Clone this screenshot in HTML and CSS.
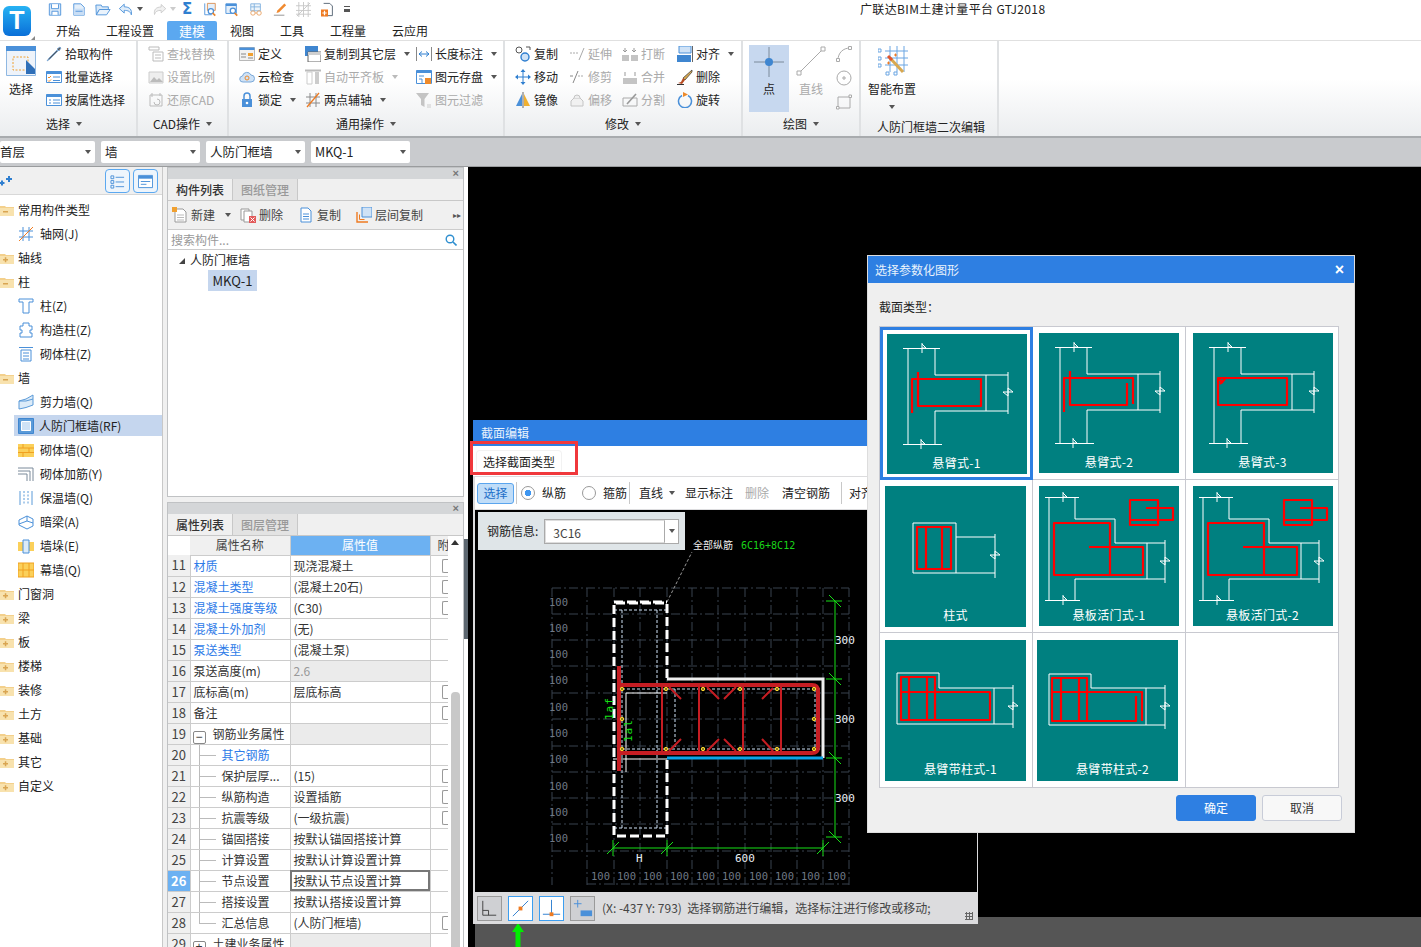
FILE: index.html
```html
<!DOCTYPE html>
<html lang="zh-CN">
<head>
<meta charset="utf-8">
<title>广联达BIM土建计量平台 GTJ2018</title>
<link rel="stylesheet" href="styles.css">
</head>
<body>
<svg class="defs" width="0" height="0" aria-hidden="true">
  <defs>
    <symbol id="fminus" viewBox="0 0 14 14"><path d="M0 3h5l1 1h8v9H0z" fill="#f3d08c"/><path d="M0 5h14v8H0z" fill="#f8e2ae"/><path d="M3 8h5v1.500H3z" fill="#d9a552"/></symbol>
    <symbol id="fplus" viewBox="0 0 14 14"><path d="M0 3h5l1 1h8v9H0z" fill="#f3d08c"/><path d="M0 5h14v8H0z" fill="#f8e2ae"/><path d="M3 8h5v1.500H3zM4.800 6.200h1.500v5H4.800z" fill="#d9a552"/></symbol>
    <symbol id="wallT" viewBox="0 0 140 140">
      <path class="w" d="M16 14.500H53M21 14V110M48 14V41H121M121 38V80M48 77H121M99 41V77M48 77V110M16 110.500H55"/>
      <path class="w" d="M35 9V19M35 10L39 14H35M34 105V115M34 106L38 110H34M116 58H126M121 54L126 58M116 58L121 62V54"/>
    </symbol>
    <symbol id="slab" viewBox="0 0 140 140">
      <path class="w" d="M10 11V114M6 11.500H40M36 11V33H76V57H126M126 54V97M36 93H126M36 93V114M6 114.500H41M108 57V93"/>
      <path class="w" d="M24 6V16M24 7L28 11H24M24 109V119M24 110L28 114H24M121 75H131M126 71L131 75M121 75L126 79V71"/>
      <path class="r" d="M71 61V37H15V89H104V61H50M71 61V89"/>
      <path class="r" d="M91 14H119V39H91ZM107 22H134V34H92"/>
    </symbol>
  </defs>
</svg>

<header class="topbar">
  <div class="logo-wrap">
    <div class="logo">T</div>
    <i class="logo-grip"></i>
  </div>
  <div class="top-main">
    <div class="qat">
      <svg class="q" viewBox="0 0 16 16"><path d="M1.500 1.500h13v13h-13z" fill="#d8e8f8" stroke="#4a90d9"/><path d="M4 2v5h8V2M4.500 14v-4h7v4" fill="#fff" stroke="#4a90d9"/></svg>
      <svg class="q q2" viewBox="0 0 16 16"><path d="M2 1.500h8l4 4v9H2z" fill="#e4effa" stroke="#4a90d9"/><path d="M2 7h12v7.500H2z" fill="#c9def5"/><path d="M4 10h8" stroke="#4a90d9"/></svg>
      <svg class="q q3" viewBox="0 0 18 16"><path d="M1 3h6l1 2h7v3H5L1.500 14z" fill="#d8e8f8" stroke="#4a90d9"/><path d="M5 8h12l-4 6H1.500z" fill="#eaf3fc" stroke="#4a90d9"/></svg>
      <svg class="q q4" viewBox="0 0 18 16"><path d="M7 2L1.500 7 7 12V9c4 0 7 1 8 5 1-6-2-9-8-9z" fill="#e0edfa" stroke="#4a90d9"/></svg>
      <i class="tri q5"></i>
      <svg class="q q6" viewBox="0 0 18 16"><path d="M11 2l5.500 5L11 12V9c-4 0-7 1-8 5-1-6 2-9 8-9z" fill="#f1f1f1" stroke="#c8c8c8"/></svg>
      <i class="tri q7"></i>
      <span class="sigma">Σ</span>
      <svg class="q q9" viewBox="0 0 16 16"><path d="M2 1v13h8" fill="none" stroke="#4a90d9"/><path d="M5 1h9v8H5z" fill="#e4effa" stroke="#d98a4a"/><circle cx="9" cy="10" r="3" fill="#fff" stroke="#4a90d9" stroke-width="1.400"/><path d="M11 12l3 3" stroke="#e8842c" stroke-width="2"/></svg>
      <svg class="q q10" viewBox="0 0 16 16"><path d="M1 1.500h12v11H1z" fill="#e4effa" stroke="#4a90d9"/><path d="M1 1.500h12V4H1z" fill="#4a90d9"/><circle cx="9" cy="9.500" r="3" fill="#fff" stroke="#4a90d9" stroke-width="1.400"/><path d="M11 12l3 3" stroke="#e8842c" stroke-width="2"/></svg>
      <svg class="q q11" viewBox="0 0 16 16"><path d="M2 1.500h11v8H2z" fill="#eef5fb" stroke="#7fb0de"/><path d="M2 5h11M6 1.500v8" stroke="#7fb0de"/><circle cx="4.500" cy="12" r="2.500" fill="none" stroke="#e8a060"/><circle cx="11.500" cy="12" r="2.500" fill="none" stroke="#e8a060"/><path d="M7 12h2" stroke="#e8a060"/></svg>
      <svg class="q q12" viewBox="0 0 16 16"><path d="M13 1L5 9l-1 3 3-1 8-8z" fill="#f08a30"/><path d="M1 14.500h12" stroke="#888"/></svg>
      <svg class="q q13" viewBox="0 0 16 16"><path d="M3 0v16M8 0v16M13 0v16M0 4h16M0 9h16M0 13h16M1 15L15 1" stroke="#c8c8c8" fill="none"/></svg>
      <svg class="q q14" viewBox="0 0 16 16"><path d="M3 1h7l3 3v11H5" fill="#fff" stroke="#4a5a6a"/><path d="M0 8h8v8H0z" fill="#ee7b22"/><path d="M4 9.500v5M1.500 12h5" stroke="#fff" stroke-width="1.400"/></svg>
      <i class="more q15"></i>
    </div>
    <nav class="tabs">
      <span class="tab t1">开始</span><span class="tab t2">工程设置</span><span class="tab active">建模</span><span class="tab t4">视图</span><span class="tab t5">工具</span><span class="tab t6">工程量</span><span class="tab t7">云应用</span>
    </nav>
  </div>
  <div class="app-title">广联达BIM土建计量平台 GTJ2018</div>
</header>

<section class="ribbon">
  <div class="group g1">
    <div class="gbody">
      <div class="big">
        <svg class="bigico" viewBox="0 0 30 30"><path d="M.5.5h29v29H.5z" fill="#eef3fa" stroke="#8fb8e2"/><path d="M0 0h30v5H0z" fill="#4a90d9"/><path d="M7 11h15v13H7z" fill="none" stroke="#f0a030" stroke-dasharray="2 1.500"/><path d="M20 14l9 9v5H20z" fill="#2f6fb8"/></svg>
        <span>选择</span>
      </div>
      <div class="col c1">
        <div class="it"><svg class="ic" viewBox="0 0 16 16"><path d="M14 1l1 1-2 3-2-2zM11 4l1 1-8 8-3 2 2-3z" fill="#555" stroke="#7aa8d8" stroke-width=".8"/></svg>拾取构件</div>
        <div class="it"><svg class="ic" viewBox="0 0 16 16"><path d="M.5 2.500h15v11H.5z" fill="#fff" stroke="#4a90d9"/><path d="M.5 2.500h15V5H.5z" fill="#4a90d9"/><path d="M2 8l1 1 2-2M2 11.500l1 1 2-2" stroke="#ee8a2a" fill="none"/><path d="M7 8h7M7 11.500h7" stroke="#4a90d9"/></svg>批量选择</div>
        <div class="it"><svg class="ic" viewBox="0 0 16 16"><path d="M.5 2.500h15v11H.5z" fill="#fff" stroke="#4a90d9"/><path d="M.5 2.500h15V5H.5z" fill="#4a90d9"/><path d="M3 8h2M3 11h2M7 8h7M7 11h7" stroke="#4a90d9"/></svg>按属性选择</div>
      </div>
    </div>
    <div class="glabel">选择<i class="tri"></i></div>
  </div>

  <div class="group g2">
    <div class="gbody">
      <div class="col">
        <div class="it off"><svg class="ic" viewBox="0 0 16 16"><path d="M1 1h10v3H1zM5 6h10v9H5zM7 9h6M7 12h6" fill="none" stroke="#bbb"/></svg>查找替换</div>
        <div class="it off"><svg class="ic" viewBox="0 0 16 16"><path d="M1 3h14v11H1z" fill="#eee" stroke="#ccc"/><path d="M2 13l4-5 3 3 2-2 4 4z" fill="#bbb"/></svg>设置比例</div>
        <div class="it off"><svg class="ic" viewBox="0 0 16 16"><path d="M2 3h12v11H2zM4 1v4M12 1v3M6 10a3 3 0 1 0 3-3" fill="none" stroke="#bbb"/></svg>还原CAD</div>
      </div>
    </div>
    <div class="glabel">CAD操作<i class="tri"></i></div>
  </div>

  <div class="group g3">
    <div class="gbody">
      <div class="col c31">
        <div class="it"><svg class="ic" viewBox="0 0 16 16"><path d="M.5 1.500h15v13H.5z" fill="#f2f2f2" stroke="#b8b8b8"/><path d="M.5 1.500h15V4H.5z" fill="#4a90d9"/><path d="M9 7h5v3H9z" fill="#f0a030"/><path d="M2 8h5M2 11h5M9 12h5" stroke="#888"/></svg>定义</div>
        <div class="it"><svg class="ic" viewBox="0 0 16 16"><path d="M4 13a3 3 0 0 1-.500-6A4.500 4.500 0 0 1 12 6a3.500 3.500 0 0 1 0 7z" fill="#cfe2f6" stroke="#7aa8d8"/><circle cx="8" cy="9" r="2" fill="none" stroke="#ee8a2a"/></svg>云检查</div>
        <div class="it"><svg class="ic" viewBox="0 0 16 16"><path d="M3 7h10v8H3z" fill="#4a90d9"/><path d="M5 7V4a3 3 0 0 1 6 0v3" fill="none" stroke="#4a90d9" stroke-width="1.500"/><circle cx="8" cy="11" r="1.300" fill="#fff"/></svg>锁定<i class="tri"></i></div>
      </div>
      <div class="col c32">
        <div class="it"><svg class="ic" viewBox="0 0 16 16"><path d="M0 0h13v10H0z" fill="#3f86d0"/><path d="M3 6h13v10H3z" fill="#fff" stroke="#666"/><path d="M3 6h13v3H3z" fill="#cfcfcf"/></svg>复制到其它层<i class="tri"></i></div>
        <div class="it off"><svg class="ic" viewBox="0 0 16 16"><path d="M0 1.500h16" stroke="#bbb" stroke-width="2"/><path d="M2 3h5v12H2z" fill="#fff" stroke="#ccc"/><path d="M10 3h4v12h-4z" fill="#ccc"/></svg>自动平齐板<i class="tri lite"></i></div>
        <div class="it"><svg class="ic" viewBox="0 0 16 16"><path d="M1 5h14M1 11h14M5 1v14M11 1v14" stroke="#8a8a8a" fill="none"/><path d="M2 15L14 1" stroke="#ee7b22" stroke-width="1.300"/></svg>两点辅轴<i class="tri"></i></div>
      </div>
      <div class="col">
        <div class="it"><svg class="ic" viewBox="0 0 16 16"><path d="M.5 1v14M15.500 1v14" stroke="#888"/><path d="M3 8h10M3 8l3-2.500M3 8l3 2.500M13 8l-3-2.500M13 8l-3 2.500" stroke="#2f7fd0" fill="none"/></svg>长度标注<i class="tri"></i></div>
        <div class="it"><svg class="ic" viewBox="0 0 16 16"><path d="M.5 1.500h15v13H.5z" fill="#fff" stroke="#4a90d9"/><path d="M.5 1.500h15V4H.5z" fill="#4a90d9"/><path d="M3 7h5M3 10h3v4" fill="none" stroke="#4a90d9"/><path d="M9 9h6v6H9z" fill="#ee8a2a"/></svg>图元存盘<i class="tri"></i></div>
        <div class="it off"><svg class="ic" viewBox="0 0 16 16"><path d="M0 1h13L8.500 7v8L5 13V7z" fill="#c4c4c4"/><path d="M11 13h4M11 15h4" stroke="#ccc"/></svg>图元过滤</div>
      </div>
    </div>
    <div class="glabel">通用操作<i class="tri"></i></div>
  </div>

  <div class="group g4">
    <div class="gbody">
      <div class="col c41">
        <div class="it"><svg class="ic" viewBox="0 0 16 16"><circle cx="4" cy="4" r="3" fill="none" stroke="#555"/><circle cx="10" cy="11" r="4" fill="#cfe2f6" stroke="#2f7fd0" stroke-width="1.400"/><path d="M11 1h4v3" fill="none" stroke="#555"/></svg>复制</div>
        <div class="it"><svg class="ic" viewBox="0 0 16 16"><path d="M8 0l2.500 3h-5zM8 16l-2.500-3h5zM0 8l3-2.500v5zM16 8l-3-2.500v5z" fill="#2f7fd0"/><path d="M8 3v10M3 8h10" stroke="#2f7fd0"/></svg>移动</div>
        <div class="it"><svg class="ic" viewBox="0 0 16 16"><path d="M7 2v12H1z" fill="#4a90d9"/><path d="M9 2v12h6z" fill="#f0b030"/><path d="M8 0v16" stroke="#666"/></svg>镜像</div>
      </div>
      <div class="col c42">
        <div class="it off"><svg class="ic" viewBox="0 0 16 16"><path d="M1 7h8" stroke="#aaa" stroke-dasharray="2 1"/><path d="M10 14l5-12" stroke="#aaa"/></svg>延伸</div>
        <div class="it off"><svg class="ic" viewBox="0 0 16 16"><path d="M9 7h6" stroke="#aaa" stroke-dasharray="2 1"/><path d="M1 7h3M4 14L9 2" stroke="#888" fill="none"/></svg>修剪</div>
        <div class="it off"><svg class="ic" viewBox="0 0 16 16"><path d="M5 6l-3 3v5h12V9l-3-3z" fill="#f1f1f1" stroke="#c4c4c4"/><path d="M5 6a3 3 0 1 1 6 0" fill="#eee" stroke="#c4c4c4"/></svg>偏移</div>
      </div>
      <div class="col c43">
        <div class="it off"><svg class="ic" viewBox="0 0 16 16"><path d="M0 9h7v6H0zM9 9h7v6H9z" fill="#c4c4c4"/><path d="M3 2v4M1 4l2 2 2-2M12 2v4M10 4l2 2 2-2" stroke="#999" fill="none"/></svg>打断</div>
        <div class="it off"><svg class="ic" viewBox="0 0 16 16"><path d="M1 9h14v6H1z" fill="#c4c4c4"/><path d="M3 3v4M13 3v4" stroke="#999"/></svg>合并</div>
        <div class="it off"><svg class="ic" viewBox="0 0 16 16"><path d="M1 6h14v8H1z" fill="none" stroke="#aaa"/><path d="M5 12L14 2" stroke="#999" stroke-width="1.600"/></svg>分割</div>
      </div>
      <div class="col">
        <div class="it"><svg class="ic" viewBox="0 0 16 16"><path d="M2 0h12v7H2z" fill="#cfe2f6" stroke="#4a90d9"/><path d="M0 9h14v7H0z" fill="#3f86d0"/><path d="M15.500 0v16" stroke="#666"/></svg>对齐<i class="tri"></i></div>
        <div class="it"><svg class="ic" viewBox="0 0 16 16"><path d="M15 1L6 9l2 2 7-8z" fill="#d8a850" stroke="#333" stroke-width=".7"/><path d="M6 9l2 2-3 4-4-1 3-1z" fill="#b84a20"/><path d="M0 15.500h7" stroke="#333"/></svg>删除</div>
        <div class="it"><svg class="ic" viewBox="0 0 16 16"><path d="M5 3.500a6.500 6.500 0 1 0 6 0" fill="none" stroke="#4a90d9" stroke-width="1.500"/><path d="M6 0l5 2.500L6 5z" fill="#ee8a2a"/></svg>旋转</div>
      </div>
    </div>
    <div class="glabel">修改<i class="tri"></i></div>
  </div>

  <div class="group g5">
    <div class="gbody">
      <div class="big ptbig">
        <svg class="bigico" viewBox="0 0 30 30"><path d="M0 15h30M15 0v30" stroke="#7a8a9a"/><circle cx="15" cy="15" r="4" fill="#3f86d0"/></svg>
        <span>点</span>
      </div>
      <div class="big ln">
        <svg class="bigico" viewBox="0 0 30 30"><path d="M3 27L27 3" stroke="#aaa"/><path d="M1 25h4v4H1zM25 1h4v4h-4z" fill="#fff" stroke="#aaa"/></svg>
        <span>直线</span>
      </div>
      <div class="shapes">
        <svg viewBox="0 0 16 16"><path d="M2 14C2 7 7 2 14 2" fill="none" stroke="#aaa"/><path d="M.5 12.500h3v3h-3zM12.500.5h3v3h-3z" fill="#fff" stroke="#aaa"/></svg>
        <svg viewBox="0 0 16 16"><circle cx="8" cy="8" r="7" fill="none" stroke="#aaa"/><path d="M7 7h2v2H7z" fill="#fff" stroke="#aaa"/></svg>
        <svg viewBox="0 0 16 16"><path d="M2 3h12v11H2z" fill="none" stroke="#aaa"/><path d="M13 1h2.500v2.500H13zM.5 12.500H3V15H.5z" fill="#fff" stroke="#aaa"/></svg>
      </div>
    </div>
    <div class="glabel">绘图<i class="tri"></i></div>
  </div>

  <div class="group g6">
    <div class="gbody smart">
      <svg class="bigico" viewBox="0 0 30 30"><path d="M7 5h23M7 12h23M7 19h23M12 0v26M19 0v26M26 0v26" stroke="#6aa5e2" fill="none"/><path d="M0 3h3v3H0zM0 11h3v3H0zM0 18h3v3H0zM8 26h3v3H8zM16 26h3v3h-3z" fill="#fff" stroke="#6aa5e2"/><path d="M12 12l13 14" stroke="#d8a850" stroke-width="3"/><path d="M10 10l4 4" stroke="#e0542c" stroke-width="3"/><path d="M9 17h3M10.500 15.500v3M16 9h3M17.500 7.500v3" stroke="#ee7b22"/></svg>
      <span>智能布置</span>
      <i class="tri"></i>
    </div>
    <div class="glabel">人防门框墙二次编辑</div>
  </div>
</section>

<div class="selbar">
  <div class="combo s1">首层<i class="tri"></i></div>
  <div class="combo">墙<i class="tri"></i></div>
  <div class="combo">人防门框墙<i class="tri"></i></div>
  <div class="combo">MKQ-1<i class="tri"></i></div>
</div>

<main class="workspace">
  <aside class="nav">
    <div class="navtool">
      <svg class="pin" viewBox="0 0 14 10"><path d="M2 4.500v5M-.5 7h5M9 0v6M6 3h6" stroke="#2f7fd0" stroke-width="2" fill="none"/></svg>
      <button class="nbtn"><svg viewBox="0 0 16 16"><path d="M1 2h3v3H1zM1 7h3v3H1zM1 12h3v3H1z" fill="none" stroke="#4a90d9"/><path d="M6 3.500h9M6 8.500h9M6 13.500h9" stroke="#4a90d9"/></svg></button>
      <button class="nbtn"><svg viewBox="0 0 16 16"><path d="M.5 1.500h15v13H.5z" fill="#fff" stroke="#4a90d9"/><path d="M1 2h14v3H1z" fill="#4a90d9"/><path d="M3 8h10M3 11h6" stroke="#4a90d9"/></svg></button>
    </div>
    <ul class="tree">
      <li class="root"><svg class="fi"><use href="#fminus"/></svg>常用构件类型</li>
      <li class="leaf"><svg class="li" viewBox="0 0 16 16"><path d="M1 5h14M1 11h14M5 1v14M11 1v14" stroke="#4a90d9" fill="none"/><path d="M1 15L15 1" stroke="#ee7b22"/></svg>轴网(J)</li>
      <li class="root"><svg class="fi"><use href="#fplus"/></svg>轴线</li>
      <li class="root"><svg class="fi"><use href="#fminus"/></svg>柱</li>
      <li class="leaf"><svg class="li" viewBox="0 0 16 16"><path d="M1 1h14v3h-4v11H5V4H1z" fill="#fff" stroke="#4a90d9"/></svg>柱(Z)</li>
      <li class="leaf"><svg class="li" viewBox="0 0 16 16"><path d="M5 1h6v3h3v4h-2v3h2v4H2v-4h2V8H2V4h3z" fill="#fff" stroke="#4a90d9"/></svg>构造柱(Z)</li>
      <li class="leaf"><svg class="li" viewBox="0 0 16 16"><path d="M1 1.500h14M3 4h10v11H3z" fill="#fff" stroke="#4a90d9"/><path d="M5 7h6M5 10h6M5 13h6" stroke="#4a90d9"/></svg>砌体柱(Z)</li>
      <li class="root"><svg class="fi"><use href="#fminus"/></svg>墙</li>
      <li class="leaf"><svg class="li" viewBox="0 0 16 16"><path d="M1 7q7-1 14-6v10Q8 14 1 15z" fill="#dcebf8" stroke="#5a9ad8"/><path d="M1 7q7 1 14-2" fill="none" stroke="#5a9ad8"/></svg>剪力墙(Q)</li>
      <li class="leaf sel"><svg class="li" viewBox="0 0 16 16"><path d="M.5.5h15v15H.5z" fill="#5a9ad8" stroke="#3f86d0"/><path d="M3.500 3.500h9v9h-9z" fill="#cfe2f6" stroke="#fff"/></svg>人防门框墙(RF)</li>
      <li class="leaf"><svg class="li" viewBox="0 0 16 16"><path d="M0 2h16v13H0z" fill="#fbd05a"/><path d="M0 6h16M0 10.500h16M5 2v4M11 6v4.500M5 10.500V15" stroke="#f0a020"/></svg>砌体墙(Q)</li>
      <li class="leaf"><svg class="li" viewBox="0 0 16 16"><path d="M0 2h15v13M0 5h12v10M0 8h9v7" fill="none" stroke="#7a8a9a"/></svg>砌体加筋(Y)</li>
      <li class="leaf"><svg class="li" viewBox="0 0 16 16"><path d="M2 1v14M14 1v14" stroke="#5a9ad8"/><path d="M6 1v14M10 1v14" stroke="#5a9ad8" stroke-dasharray="2 1.500"/></svg>保温墙(Q)</li>
      <li class="leaf"><svg class="li" viewBox="0 0 16 16"><path d="M1 6l8-4 6 3v7l-6 3-8-4z" fill="#fff" stroke="#4a90d9"/><path d="M9 2v5L1 10M9 7l6 2" stroke="#4a90d9" fill="none"/></svg>暗梁(A)</li>
      <li class="leaf"><svg class="li" viewBox="0 0 16 16"><path d="M0 4h16v9H0z" fill="#fbd05a"/><path d="M5 2h6v13H5z" fill="#dcebf8" stroke="#4a90d9"/></svg>墙垛(E)</li>
      <li class="leaf"><svg class="li" viewBox="0 0 16 16"><path d="M0 1h16v14H0z" fill="#fbd05a" stroke="#f0a020"/><path d="M5 1v14M11 1v14M0 8h16" stroke="#f0a020"/></svg>幕墙(Q)</li>
      <li class="root"><svg class="fi"><use href="#fplus"/></svg>门窗洞</li>
      <li class="root"><svg class="fi"><use href="#fplus"/></svg>梁</li>
      <li class="root"><svg class="fi"><use href="#fplus"/></svg>板</li>
      <li class="root"><svg class="fi"><use href="#fplus"/></svg>楼梯</li>
      <li class="root"><svg class="fi"><use href="#fplus"/></svg>装修</li>
      <li class="root"><svg class="fi"><use href="#fplus"/></svg>土方</li>
      <li class="root"><svg class="fi"><use href="#fplus"/></svg>基础</li>
      <li class="root"><svg class="fi"><use href="#fplus"/></svg>其它</li>
      <li class="root"><svg class="fi"><use href="#fplus"/></svg>自定义</li>
    </ul>
  </aside>

  <div class="panels">
    <section class="panel p1">
      <div class="phead"><span>×</span></div>
      <div class="ptabs"><span class="ptab on">构件列表</span><span class="ptab">图纸管理</span></div>
      <div class="ptool">
        <span class="pt pt1"><svg class="ic" viewBox="0 0 16 16"><path d="M3 2h8l3 3v10H3z" fill="#fff" stroke="#999"/><path d="M5 8h7M5 10.500h7M5 13h7" stroke="#bbb"/><path d="M0 0h5v5H0z" fill="#f0a030"/></svg>新建<i class="tri"></i></span>
        <span class="pt pt2"><svg class="ic" viewBox="0 0 16 16"><path d="M1 2h8v11H1z" fill="#fff" stroke="#999"/><path d="M4 4h8v11H4z" fill="#fff" stroke="#999"/><path d="M9 9h7v7H9z" fill="#e25a5a"/><path d="M10.500 10.500l4 4M14.500 10.500l-4 4" stroke="#fff"/></svg>删除</span>
        <span class="pt pt3"><svg class="ic" viewBox="0 0 16 16"><path d="M3 1h7l3 3v11H3z" fill="#fff" stroke="#4a90d9"/><path d="M5 7h6M5 9.500h6M5 12h6" stroke="#4a90d9"/></svg>复制</span>
        <span class="pt pt4"><svg class="ic" viewBox="0 0 16 16"><path d="M1 5v10h11" fill="none" stroke="#ee7b22" stroke-width="1.400"/><path d="M3.500 7.500v5h5" fill="none" stroke="#ee7b22"/><path d="M6 0h10v10H6z" fill="#cfe2f6" stroke="#4a90d9"/></svg>层间复制</span>
        <span class="pmore">▸▸</span>
      </div>
      <div class="search"><span>搜索构件...</span><svg viewBox="0 0 12 12"><circle cx="5" cy="5" r="3.800" fill="none" stroke="#2f8fd0" stroke-width="1.400"/><path d="M8 8l3.500 3.500" stroke="#2f8fd0" stroke-width="1.600"/></svg></div>
      <div class="ctree">
        <div class="cnode"><i class="opened"></i>人防门框墙</div>
        <div class="cleaf">MKQ-1</div>
      </div>
    </section>

    <section class="panel p2">
      <div class="phead"><span>×</span></div>
      <div class="ptabs"><span class="ptab on">属性列表</span><span class="ptab">图层管理</span></div>
      <div class="pbody">
        <table class="props">
          <colgroup><col class="cn"><col class="ck"><col class="cv"><col class="ca"></colgroup>
          <thead><tr><th class="blank"></th><th>属性名称</th><th class="hv">属性值</th><th>附</th></tr></thead>
          <tbody>
            <tr><td class="n">11</td><td class="b">材质</td><td>现浇混凝土</td><td class="a"><i></i></td></tr>
            <tr><td class="n">12</td><td class="b">混凝土类型</td><td>(混凝土20石)</td><td class="a"><i></i></td></tr>
            <tr><td class="n">13</td><td class="b">混凝土强度等级</td><td>(C30)</td><td class="a"><i></i></td></tr>
            <tr><td class="n">14</td><td class="b">混凝土外加剂</td><td>(无)</td><td class="a"></td></tr>
            <tr><td class="n">15</td><td class="b">泵送类型</td><td>(混凝土泵)</td><td class="a"></td></tr>
            <tr><td class="n">16</td><td>泵送高度(m)</td><td class="g dim">2.6</td><td class="a"></td></tr>
            <tr><td class="n">17</td><td>底标高(m)</td><td>层底标高</td><td class="a"><i></i></td></tr>
            <tr><td class="n">18</td><td>备注</td><td></td><td class="a"><i></i></td></tr>
            <tr><td class="n">19</td><td class="hd"><b class="box">−</b>钢筋业务属性</td><td class="g"></td><td class="a"></td></tr>
            <tr><td class="n">20</td><td class="ind b">其它钢筋</td><td></td><td class="a"></td></tr>
            <tr><td class="n">21</td><td class="ind">保护层厚...</td><td>(15)</td><td class="a"><i></i></td></tr>
            <tr><td class="n">22</td><td class="ind">纵筋构造</td><td>设置插筋</td><td class="a"><i></i></td></tr>
            <tr><td class="n">23</td><td class="ind">抗震等级</td><td>(一级抗震)</td><td class="a"><i></i></td></tr>
            <tr><td class="n">24</td><td class="ind">锚固搭接</td><td>按默认锚固搭接计算</td><td class="a"></td></tr>
            <tr><td class="n">25</td><td class="ind">计算设置</td><td>按默认计算设置计算</td><td class="a"></td></tr>
            <tr><td class="n cur">26</td><td class="ind">节点设置</td><td class="edit">按默认节点设置计算</td><td class="a"></td></tr>
            <tr><td class="n">27</td><td class="ind">搭接设置</td><td>按默认搭接设置计算</td><td class="a"></td></tr>
            <tr><td class="n">28</td><td class="ind end">汇总信息</td><td>(人防门框墙)</td><td class="a"><i></i></td></tr>
            <tr><td class="n">29</td><td class="hd"><b class="box">+</b>土建业务属性</td><td class="g"></td><td class="a"></td></tr>
          </tbody>
        </table>
        <div class="vscroll"><i class="up"></i><i class="thumb"></i></div>
      </div>
    </section>
  </div>

  <div class="splitter"><i></i></div>

  <div class="canvas">
    <div class="floorstrip"><svg viewBox="0 0 12 24"><path d="M6 0L12 9H8.500V24H3.500V9H0Z" fill="#00ee00"/></svg></div>

    <section class="win section">
      <div class="wtitle">截面编辑</div>
      <div class="wrow1"><span class="typebtn">选择截面类型</span></div>
      <i class="redbox"></i>
      <div class="wrow2">
        <span class="tb tbon">选择</span><i class="sep"></i>
        <span class="rad on"></span><span class="rl">纵筋</span>
        <span class="rad"></span><span class="rl rl2">箍筋</span><i class="sep"></i>
        <span class="tb tb1">直线<i class="tri"></i></span>
        <span class="tb">显示标注</span>
        <span class="tb off tb3">删除</span>
        <span class="tb tb4">清空钢筋</span><i class="sep sep3"></i>
        <span class="tb">对齐</span>
      </div>
      <div class="cad">
        <div class="rebar"><label>钢筋信息:</label><div class="rcombo"><span>3C16</span><i><b class="tri"></b></i></div></div>
        <svg class="cadsvg" viewBox="475 510 502 382">
          <path class="grid" d="M552 588V885M587 588V885M614 588V885M640 588V885M667 588V885M692 588V885M718 588V885M745 588V885M771 588V885M797 588V885M823 588V885M849 588V885M552 588H849M552 614H849M552 640H849M552 666H849M552 693H849M552 719H849M552 746H849M552 772H849M552 798H849M552 824H849M552 851H849M587 884H849"/>
          <g class="dimtxt">
            <text x="549" y="606">100</text><text x="549" y="632">100</text><text x="549" y="658">100</text><text x="549" y="684">100</text><text x="549" y="711">100</text><text x="549" y="737">100</text><text x="549" y="763">100</text><text x="549" y="790">100</text><text x="549" y="816">100</text><text x="549" y="842">100</text>
            <text x="591" y="880">100</text><text x="617" y="880">100</text><text x="643" y="880">100</text><text x="670" y="880">100</text><text x="696" y="880">100</text><text x="722" y="880">100</text><text x="749" y="880">100</text><text x="775" y="880">100</text><text x="801" y="880">100</text><text x="827" y="880">100</text>
          </g>
          <path class="lead" d="M667 602L692 552"/>
          <text class="cn1" x="693" y="549">全部纵筋</text><text class="cn2" x="741" y="549">6C16+8C12</text>
          <path class="ldash" d="M622 610V828M657 610V828M614 610H667M614 828H667M622 689H823M622 749H823M815 689V749M675 689V749"/>
          <path class="wdash" d="M667 678V603H614V836H667V759M614 602H667"/>
          <path class="wsolid" d="M667 679H823V758"/>
          <path class="wthin" d="M613 759H667M626 772V693H667"/>
          <path class="blue" d="M667 758H823"/>
          <path class="rthick" d="M619 666V771M620 685H812Q818 685 818 691V747Q818 753 812 753H620"/>
          <path class="rthin" d="M662 685V753M699 685V753M743 685V753M781 685V753M669 687L681 699M707 687L719 699M736 687L724 699M773 688L762 699M669 751L681 739M707 751L719 739M736 751L724 739M773 751L762 739"/>
          <g class="dots"><circle cx="622" cy="689" r="1.700"/><circle cx="666" cy="689" r="1.700"/><circle cx="703" cy="689" r="1.700"/><circle cx="740" cy="689" r="1.700"/><circle cx="777" cy="689" r="1.700"/><circle cx="814" cy="689" r="1.700"/><circle cx="622" cy="749" r="1.700"/><circle cx="666" cy="749" r="1.700"/><circle cx="703" cy="749" r="1.700"/><circle cx="740" cy="749" r="1.700"/><circle cx="777" cy="749" r="1.700"/><circle cx="814" cy="749" r="1.700"/><circle cx="622" cy="719" r="1.700"/><circle cx="814" cy="719" r="1.700"/></g>
          <path class="green" d="M835 601V837M826 601H842M826 679H842M826 758H842M826 837H842M829 595L841 607M829 673L841 685M829 752L841 764M829 831L841 843M613 848H823M613 840V856M667 840V856M823 840V856M607 854L619 842M661 854L673 842M817 854L829 842"/>
          <text class="gtxt" transform="translate(613 720) rotate(-90)">1af</text>
          <text class="gtxt" transform="translate(632 742) rotate(-90)">1al</text>
          <g class="wtxt"><text x="835" y="644">300</text><text x="835" y="723">300</text><text x="835" y="802">300</text><text x="636" y="862">H</text><text x="735" y="862">600</text></g>
        </svg>
      </div>
      <div class="wstatus">
        <span class="sb"><svg viewBox="0 0 24 24"><path d="M5 4v15h14M5 14h6v5" fill="none" stroke="#444"/></svg></span>
        <span class="sb act"><svg viewBox="0 0 24 24"><path d="M4 20L20 4" stroke="#2f7fd0"/><path d="M10 10h4v4h-4z" fill="#ee7b22"/></svg></span>
        <span class="sb act"><svg viewBox="0 0 24 24"><path d="M12 3v16M3 18h18" stroke="#2f7fd0"/><path d="M10 16h4v4h-4z" fill="#ee7b22"/></svg></span>
        <span class="sb"><svg viewBox="0 0 24 24"><path d="M3 7h8M7 3v8" stroke="#4a90d9"/><path d="M10 14h12v6H10z" fill="#4a90d9"/></svg></span>
        <span class="stext">(X: -437 Y: 793)&nbsp; 选择钢筋进行编辑，选择标注进行修改或移动;</span>
        <i class="grip"></i>
      </div>
    </section>

    <section class="win dialog">
      <div class="dtitle"><span>选择参数化图形</span><span class="x">×</span></div>
      <div class="dbody">
        <div class="dlabel">截面类型：</div>
        <div class="shapesgrid">
          <div class="cell selcell"><div class="tile">
            <svg viewBox="0 0 140 120"><use href="#wallT" width="140" height="140"/><path class="r" d="M25 79V45H94V72H31V38"/></svg><span>悬臂式-1</span></div></div>
          <div class="cell"><div class="tile">
            <svg viewBox="0 0 140 120"><use href="#wallT" width="140" height="140"/><path class="r" d="M25 79V45H94V71M31 38V72H88V50"/></svg><span>悬臂式-2</span></div></div>
          <div class="cell"><div class="tile">
            <svg viewBox="0 0 140 120"><use href="#wallT" width="140" height="140"/><path class="r" d="M25 45H94V72H25ZM25 45L30 50M27 51L32 46"/></svg><span>悬臂式-3</span></div></div>
          <div class="cell"><div class="tile tw">
            <svg viewBox="0 0 140 120"><path class="w" d="M27 37H70V87H27ZM70 51H109M70 87H109M109 48V92M104 69H114M109 65L114 69M104 69L109 73V65"/><path class="r" d="M31 41H65V83H31ZM40 41V83M56 41V83"/></svg><span>柱式</span></div></div>
          <div class="cell"><div class="tile">
            <svg viewBox="0 0 140 120"><use href="#slab" width="140" height="140"/></svg><span>悬板活门式-1</span></div></div>
          <div class="cell"><div class="tile">
            <svg viewBox="0 0 140 120"><use href="#slab" width="140" height="140"/></svg><span>悬板活门式-2</span></div></div>
          <div class="cell"><div class="tile tw">
            <svg viewBox="0 0 140 120"><path class="w" d="M11 33H53V48H127M11 33V84H127M127 45V88M108 48V84M122 66H132M127 62L132 66M122 66L127 70V62"/><path class="r" d="M15 37H49V80H15ZM15 52H104V80H49M23 37V80M41 37V80"/></svg><span class="cap7">悬臂带柱式-1</span></div></div>
          <div class="cell"><div class="tile tw shiftl">
            <svg viewBox="0 0 140 120"><path class="w" d="M11 34H53V48H127M11 34V85H127M127 45V89M108 48V85M122 66H132M127 62L132 66M122 66L127 70V62"/><path class="r" d="M14 38H49V81H14ZM14 52H104V81M23 38V81M41 38V81M98 56V81H14"/></svg><span class="cap7">悬臂带柱式-2</span></div></div>
          <div class="cell"></div>
        </div>
        <div class="dbtns"><button class="ok">确定</button><button class="cancel">取消</button></div>
      </div>
    </section>
  </div>
</main>
</body>
</html>
```

FILE: styles.css
```css
* { box-sizing: border-box; }
html, body { margin: 0; padding: 0; }
body {
  width: 1421px; height: 947px; overflow: hidden; display: flex; flex-direction: column;
  background: #f0f0f0; color: #222;
  font: 12px/16px "Noto Sans CJK SC", "Liberation Sans", sans-serif;
}
.defs { position: absolute; }
i { display: block; font-style: normal; }
.tri { display: inline-block; width: 0; height: 0; border: 3.500px solid transparent; border-top: 4px solid #555; border-bottom: 0; }
.tri.lite { border-top-color: #bbb; }

/* header */
.topbar { height: 40px; background: #fff; display: flex; flex: none; }
.logo-wrap { width: 38px; flex: none; padding: 6px 0 0 3px; }
.logo { width: 28px; height: 30px; border-radius: 6px; background: linear-gradient(#27b2f3, #0a6fd8); color: #fff; font: bold 25px/29px "Liberation Sans", sans-serif; text-align: center; }
.logo-grip { width: 0; height: 0; border: 2px solid #888; border-top-color: transparent; border-left-color: transparent; margin: 0 0 0 28px; }
.top-main { width: 400px; flex: none; display: flex; flex-direction: column; }
.qat { height: 21px; display: flex; align-items: center; padding: 0 0 3px 10px; }
.q { width: 14px; height: 15px; flex: none; }
.q2 { margin-left: 10px; } .q3 { margin-left: 9px; width: 16px; } .q4 { margin-left: 7px; width: 16px; }
.q5 { margin-left: 3px; } .q6 { margin-left: 9px; width: 15px; } .q7 { margin-left: 3px; border-top-color: #ccc; }
.sigma { margin-left: 6px; width: 12px; color: #2f7fd0; font: bold 15px/15px "DejaVu Sans", sans-serif; }
.q9 { margin-left: 9px; } .q10 { margin-left: 8px; } .q11 { margin-left: 10px; } .q12 { margin-left: 10px; }
.q13 { margin-left: 9px; width: 15px; } .q14 { margin-left: 10px; } .more { margin-left: 9px; width: 6px; height: 6px; border-top: 1px solid #555; border-bottom: 3px solid #555; }
.tabs { height: 19px; display: flex; line-height: 20px; white-space: nowrap; }
.t1 { margin-left: 18px; } .t2 { margin-left: 26px; }
.tab.active { margin-left: 13px; width: 50px; background: #5ba8f0; color: #fff; text-align: center; border-radius: 2px 2px 0 0; font-size: 13px; }
.t4 { margin-left: 13px; } .t5 { margin-left: 26px; } .t6 { margin-left: 26px; } .t7 { margin-left: 26px; }
.app-title { margin-left: 422px; margin-top: 1px; white-space: nowrap; letter-spacing: .35px; }

/* ribbon */
.ribbon { height: 98px; flex: none; display: flex; background: linear-gradient(#fff 40%, #ebedef); border-top: 1px solid #e0e0e0; border-bottom: 2px solid #a8abae; }
.group { display: flex; flex-direction: column; border-right: 2px solid #dfe1e3; flex: none; }
.gbody { height: 72px; padding-top: 1px; display: flex; }
.glabel { flex: 1; display: flex; justify-content: center; align-items: center; gap: 6px; padding-bottom: 2px; font-size: 12px; }
.col { display: flex; flex-direction: column; flex: none; }
.it { height: 23px; display: flex; align-items: center; gap: 3px; white-space: nowrap; }
.it .tri { margin-left: 5px; }
.off { color: #aaa; }
.ic { width: 16px; height: 16px; flex: none; }
.big { display: flex; flex-direction: column; align-items: center; width: 30px; flex: none; }
.bigico { width: 30px; height: 30px; flex: none; display: block; margin-top: 4px; }
.big span { margin-top: 5px; white-space: nowrap; }
.g1 { width: 138px; } .g1 .gbody { padding-left: 6px; } .g1 .glabel { padding-right: 8px; }
.c1 { margin-left: 10px; }
.g2 { width: 91px; } .g2 .gbody { padding-left: 10px; }
.g3 { width: 276px; } .g3 .gbody { padding-left: 10px; }
.c31 { width: 66px; } .c32 { width: 111px; }
.g4 { width: 238px; } .g4 .gbody { padding-left: 10px; }
.c41 { width: 54px; } .c42 { width: 53px; } .c43 { width: 55px; }
.g5 { width: 118px; } .g5 .gbody { padding-left: 6px; }
.ptbig { width: 40px; height: 67px; margin-top: 3px; background: #c7d8ef; }
.ptbig .bigico { margin-top: 2px; }
.ptbig span { margin-top: 4px; }
.ln { margin-left: 7px; color: #aaa; }
.shapes { margin-left: 10px; width: 16px; display: flex; flex-direction: column; gap: 8px; padding-top: 4px; }
.shapes svg { width: 16px; height: 16px; display: block; }
.g6 { width: 138px; } .smart { display: flex; flex-direction: column; align-items: center; width: 62px; }
.smart .bigico { margin: 4px 0 0 2px; } .smart span { margin: 5px 0 0 0; white-space: nowrap; } .smart .tri { margin-top: 8px; }
.g6 .glabel { padding: 4px 0 0 4px; }

/* selector bar */
.selbar { height: 29px; flex: none; display: flex; gap: 6px; align-items: center; background: #c9cbce; border-bottom: 1px solid #9a9c9e; }
.combo { width: 99px; height: 22px; background: #fff; border-radius: 2px; padding: 0 0 0 4px; display: flex; justify-content: space-between; align-items: center; font-size: 12.500px; }
.combo .tri { margin-right: 4px; }
.s1 { width: 95px; padding-left: 0; }

/* workspace */
.workspace { flex: 1; display: flex; min-height: 0; }
.nav { width: 163px; flex: none; background: #fff; border-right: 1px solid #c8c8c8; }
.navtool { height: 28px; background: #f0f0f0; border-bottom: 1px solid #d8d8d8; display: flex; align-items: center; padding: 0 4px 0 0; gap: 3px; }
.pin { width: 14px; height: 10px; margin-right: auto; }
.nbtn { width: 25px; height: 24px; padding: 4px; border: 1px solid #5ba8f0; border-radius: 4px; background: #eef5fc; }
.nbtn svg { width: 15px; height: 15px; display: block; }
.tree { list-style: none; margin: 0; padding: 3px 0 0; }
.tree li { height: 24px; display: flex; align-items: center; white-space: nowrap; }
.fi { width: 14px; height: 14px; flex: none; margin-right: 4px; }
.li { width: 16px; height: 16px; flex: none; margin: 0 6px 0 18px; }
.tree li.sel { margin: 1px 0 2px 14px; background: #c5d6ee; height: 21px; }
.leaf.sel .li { margin-left: 4px; margin-right: 5px; }

.panels { width: 297px; flex: none; margin-left: 4px; display: flex; flex-direction: column; gap: 5px; min-height: 0; }
.panel { background: #fff; border: 1px solid #c0c2c4; border-bottom: 0; display: flex; flex-direction: column; min-height: 0; }
.p1 { height: 330px; flex: none; border-bottom: 1px solid #c0c2c4; }
.p2 { flex: 1; overflow: hidden; }
.phead { height: 11px; background: #d4d6d8; flex: none; text-align: right; padding-right: 4px; color: #777; font: bold 11px/11px "Liberation Sans", sans-serif; }
.ptabs { height: 22px; flex: none; background: #f0f0f0; display: flex; border-bottom: 1px solid #c8c8c8; }
.ptab { width: 65px; text-align: center; line-height: 21px; color: #999; background: #e3e3e3; border-right: 1px solid #c8c8c8; font-weight: 500; }
.ptab.on { background: #f0f0f0; color: #333; }
.ptool { height: 29px; flex: none; background: #f0f0f0; border-bottom: 1px solid #ccc; display: flex; align-items: center; color: #444; }
.pt { display: flex; align-items: center; gap: 3px; white-space: nowrap; }
.pt .tri { margin-left: 7px; }
.pt1 { margin-left: 4px; } .pt2 { margin-left: 9px; } .pt3 { margin-left: 15px; } .pt4 { margin-left: 15px; }
.pmore { margin-left: auto; margin-right: 2px; font-size: 8px; color: #555; }
.search { height: 20px; flex: none; display: flex; justify-content: space-between; align-items: center; padding: 0 6px 0 3px; color: #999; border-bottom: 1px solid #ccc; }
.search svg { width: 12px; height: 12px; }
.ctree { flex: 1; }
.cnode { height: 20px; display: flex; align-items: center; padding-left: 11px; }
.opened { width: 0; height: 0; border: 3px solid transparent; border-right-color: #444; border-bottom-color: #444; margin: 2px 5px 0 0; }
.cleaf { width: 49px; height: 21px; margin-left: 40px; background: #c5d6ee; line-height: 21px; text-align: center; font-size: 13px; }

.pbody { flex: 1; display: flex; min-height: 0; overflow: hidden; }
.props { width: 280px; table-layout: fixed; border-collapse: collapse; flex: none; align-self: flex-start; }
.cn { width: 22px; } .ck { width: 100px; } .cv { width: 140px; } .ca { width: 18px; }
.props th { height: 19px; padding: 0; font-weight: 400; background: #f0f0f0; color: #444; border-right: 1px solid #ccc; border-bottom: 1px solid #ccc; overflow: hidden; white-space: nowrap; line-height: 18px; }
.props th:last-child { text-align: left; padding-left: 7px; border-right: 0; }
.props th.blank { background: #fff; border: 0; }
.props th.hv { background: #6cb1f2; color: #fff; }
.props td { height: 21px; padding: 0 0 0 3px; border-bottom: 1px solid #ccc; border-right: 1px solid #ccc; overflow: hidden; white-space: nowrap; line-height: 20px; color: #333; }
.props td.n { background: #f0f0f0; padding: 0; text-align: center; font-size: 13px; color: #444; }
.props td.n.cur { background: #6cb1f2; color: #fff; font-weight: 700; }
.props td.b { color: #2d7be8; }
.props td.g { background: #ebebeb; }
.props td.dim { color: #999; }
.props td.a { border-right: 0; padding: 0 0 0 11px; }
.props td.a i { width: 10px; height: 14px; border: 1px solid #999; border-right: 0; border-radius: 2px 0 0 2px; }
.props td.hd { padding-left: 1px; }
.box { display: inline-block; width: 13px; height: 13px; margin: 0 7px 0 1px; border: 1px solid #888; border-radius: 2px; font: 400 12px/10px "Liberation Sans", sans-serif; text-align: center; vertical-align: -2px; }
.props td.ind { padding-left: 31px; background: linear-gradient(#bbb, #bbb) 8px 0 / 1px 100% no-repeat, linear-gradient(#bbb, #bbb) 8px 10px / 17px 1px no-repeat; }
.props td.ind.end { background: linear-gradient(#bbb, #bbb) 8px 0 / 1px 11px no-repeat, linear-gradient(#bbb, #bbb) 8px 10px / 17px 1px no-repeat; }
.props td.edit { outline: 2px solid #777; outline-offset: -2px; }
.vscroll { flex: 1; background: #fff; padding-left: 3px; }
.up { width: 0; height: 0; margin: 4px 0 0 0; border: 4px solid transparent; border-bottom: 5px solid #333; border-top: 0; }
.thumb { width: 9px; height: 260px; margin-top: 147px; background: #c8c8c8; border-radius: 4px 4px 0 0; }

.splitter { width: 4px; flex: none; background: #fff; padding-top: 372px; }
.splitter i { width: 4px; height: 100px; background: #5d6770; }

.canvas { flex: 1; background: #000; position: relative; min-width: 0; }
.floorstrip { position: absolute; left: 7px; right: 0; bottom: 0; height: 30px; background: #555; }
.floorstrip svg { position: absolute; left: 37px; top: 6px; width: 12px; height: 24px; }
.win { position: absolute; }
.section { left: 5px; top: 253px; width: 505px; height: 504px; background: #dcdcde; display: flex; flex-direction: column; }
.wtitle { height: 26px; flex: none; background: #2e7fe2; color: #e9f2fc; padding: 5px 0 0 8px; }
.wrow1 { height: 30px; flex: none; background: #fff; padding: 5px 0 0 4px; }
.typebtn { display: inline-block; height: 21px; padding: 0 6px; line-height: 21px; border-radius: 3px; box-shadow: 0 0 0 1px #f2f2f2; }
.redbox { position: absolute; left: -3px; top: 21px; width: 108px; height: 34px; border: 3px solid #f0383c; }
.wrow2 { height: 32px; flex: none; margin: 1px 0 0 2px; background: #fff; display: flex; align-items: center; overflow: hidden; white-space: nowrap; }
.tb { display: flex; align-items: center; gap: 6px; height: 21px; padding: 0 5px; flex: none; }
.tb.off { color: #aaa; }
.tb1 { margin-left: 2px; }
.tb3 { margin-left: 2px; } .tb4 { margin-left: 3px; }
.tbon { width: 37px; padding: 0; justify-content: center; margin-left: 2px; background: #c0ddf8; border: 1px solid #5aa5ee; border-radius: 3px; color: #1e6fc8; }
.sep { width: 1px; height: 22px; background: #c8c8c8; margin: 0 2px; flex: none; }
.sep3 { margin-left: 6px; }
.rad { width: 14px; height: 14px; border: 1px solid #999; border-radius: 50%; flex: none; margin: 0 7px 0 4px; background: #fff; }
.rad.on { background: radial-gradient(circle, #3f96f0 3px, #fff 3.500px); margin-left: 2px; }
.rl { width: 36px; flex: none; } .rl2 { width: 24px; }
.cad { height: 382px; flex: none; margin: 1px 1px 0 2px; background: #000; position: relative; overflow: hidden; }
.cadsvg { display: block; width: 502px; height: 382px; }
.rebar { position: absolute; left: 3px; top: 2px; width: 207px; height: 38px; background: #dfe5e8; display: flex; align-items: center; padding-left: 9px; gap: 6px; white-space: nowrap; }
.rcombo { width: 135px; height: 25px; background: #fff; border: 1px solid #aaa; display: flex; }
.rcombo span { flex: 1; padding-left: 7px; line-height: 24px; font-size: 12px; color: #444; border: 1px solid #ddd; border-right: 1px solid #aaa; }
.rcombo i { width: 13px; display: flex; align-items: center; justify-content: center; }
.grid { fill: none; stroke: #39424e; stroke-dasharray: 9 3 2 3; }
.dimtxt text { fill: #6f7986; font: 10.500px "DejaVu Sans Mono", monospace; }
.lead { stroke: #999; stroke-dasharray: 3 2; fill: none; }
.cn1 { fill: #eee; font: 10px "Noto Sans CJK SC", sans-serif; }
.cn2 { fill: #19d419; font: 10px "DejaVu Sans Mono", monospace; }
.ldash { fill: none; stroke: #cfe2f6; stroke-dasharray: 3 2; }
.wdash { fill: none; stroke: #fff; stroke-width: 3; stroke-dasharray: 9 4; }
.wsolid { fill: none; stroke: #eee; stroke-width: 3; }
.wthin { fill: none; stroke: #fff; }
.blue { stroke: #0aa4e8; stroke-width: 3; fill: none; }
.rthick { fill: none; stroke: #c61d23; stroke-width: 4; }
.rthin { fill: none; stroke: #c61d23; stroke-width: 2; }
.dots circle { fill: #8a7a20; stroke: #ffd92e; stroke-width: 1; }
.green { fill: none; stroke: #16e016; }
.gtxt { fill: #16e016; font: 11px "DejaVu Sans Mono", monospace; letter-spacing: 1px; }
.wtxt text { fill: #e8eef2; font: 11px "DejaVu Sans Mono", monospace; }
.wstatus { flex: 1; display: flex; align-items: center; padding: 0 0 0 4px; gap: 6px; position: relative; color: #444; white-space: nowrap; }
.sb { width: 25px; height: 25px; flex: none; border: 1px solid #9a9a9a; background: #cfd0d3; }
.sb svg { width: 23px; height: 23px; display: block; }
.sb.act { background: #fff; border-color: #3c9ef0; }
.stext { margin-left: 1px; }
.grip { position: absolute; right: 5px; bottom: 4px; width: 8px; height: 8px; background: radial-gradient(circle, #666 1px, transparent 1.200px) 0 0 / 3px 3px; }

.dialog { left: 400px; top: 89px; width: 486px; height: 576px; background: #efefef; display: flex; flex-direction: column; box-shadow: 0 0 0 1px #ddd; }
.dtitle { height: 27px; flex: none; background: #2e7fe2; color: #e9f2fc; display: flex; justify-content: space-between; align-items: center; padding: 0 10px 0 7px; }
.dtitle .x { color: #fff; font: bold 16px/16px "Liberation Sans", sans-serif; }
.dbody { flex: 1; padding: 0 0 0 11px; }
.dlabel { height: 43px; padding-top: 16px; line-height: 16px; color: #222; }
.shapesgrid { width: 460px; display: grid; grid-template-columns: repeat(3, 153px); grid-template-rows: 153px 153px 154px; background: #fff; border: 1px solid #c8c9d0; }
.cell { border-right: 1px solid #c8c9d0; border-bottom: 1px solid #c8c9d0; display: flex; align-items: center; justify-content: center; }
.cell:nth-child(3n) { border-right: 0; }
.cell:nth-child(n+7) { border-bottom: 0; }
.selcell { border: 3px solid #2e7fe2; }
.tile { width: 140px; height: 140px; background: #008080; display: flex; flex-direction: column; align-items: center; flex: none; color: #fff; }
.tile svg { width: 140px; height: 120px; display: block; flex: none; }
.tile span { line-height: 18px; font-size: 12px; letter-spacing: .3px; }
.tw { width: 141px; height: 141px; margin-left: -1px; }
.shiftl { margin-left: -3px; }
.cap7 { margin-left: 10px; }
.w { fill: none; stroke: #fff; stroke-width: 1; }
.r { fill: none; stroke: #f00; stroke-width: 2.200; stroke-linejoin: round; }
.dbtns { display: flex; justify-content: flex-end; gap: 6px; padding: 7px 12px 0 0; }
.dbtns button { width: 80px; height: 26px; border-radius: 3px; font: 12px/16px "Noto Sans CJK SC", sans-serif; padding: 0; }
.ok { background: #2e7fe2; border: 1px solid #2e7fe2; color: #fff; }
.cancel { background: #f8f8f8; border: 1px solid #c8ccd8; color: #333; }
```
